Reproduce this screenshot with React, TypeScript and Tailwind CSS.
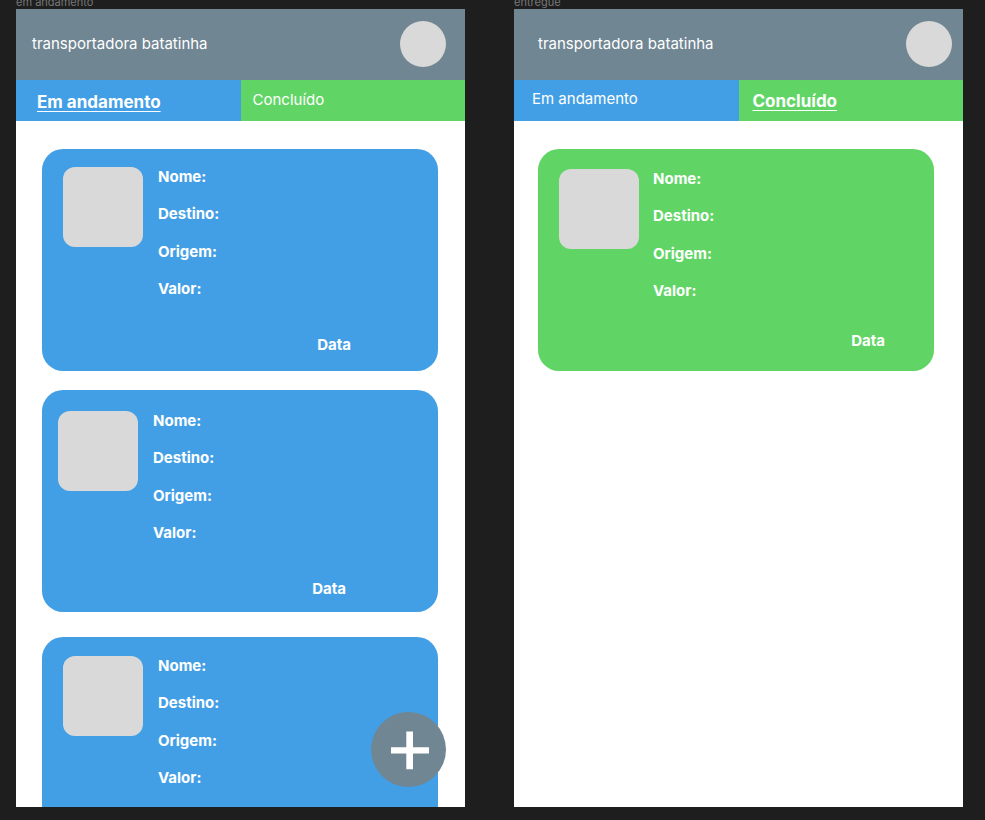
import { clsx } from "clsx";

type TabId = "andamento" | "concluido";

type Card = {
  id: number;
  inset: string;
  datePosition: string;
};

type ScreenProps = {
  label: string;
  active: TabId;
  headerPadding: string;
  listPadding: string;
  tabPadding: Record<TabId, string>;
  cardColor: string;
  cardGap: string;
  cards: Card[];
  canAdd?: boolean;
};

const fields = ["Nome:", "Destino:", "Origem:", "Valor:"];

const tabs: { id: TabId; title: string; color: string }[] = [
  { id: "andamento", title: "Em andamento", color: "bg-[#439fe5]" },
  { id: "concluido", title: "Concluído", color: "bg-[#60d565]" },
];

function DeliveryCard({ card, color, gap }: { card: Card; color: string; gap: string }) {
  return (
    <li
      className={clsx(
        "flex h-[222px] shrink-0 flex-col rounded-[21px] text-[15px] leading-[19px] font-bold text-white",
        color,
        card.inset,
      )}
    >
      <div className={clsx("flex", gap)}>
        <div className="size-20 shrink-0 rounded-xl bg-[#d9d9d9]" />
        <ul className="flex h-[131px] flex-col justify-between">
          {fields.map((field) => (
            <li key={field}>{field}</li>
          ))}
        </ul>
      </div>
      <p className={clsx("text-right", card.datePosition)}>Data</p>
    </li>
  );
}

function Screen({
  label,
  active,
  headerPadding,
  listPadding,
  tabPadding,
  cardColor,
  cardGap,
  cards,
  canAdd = false,
}: ScreenProps) {
  return (
    <section className="flex min-h-0 min-w-0 flex-col">
      <div className="flex h-[9px] shrink-0 items-end overflow-hidden pb-px text-[11px] leading-[12px] text-[#777777]">
        <h2>{label}</h2>
      </div>
      <div className="relative flex min-h-0 flex-1 flex-col overflow-hidden bg-white">
        <header
          className={clsx(
            "flex h-[71px] shrink-0 items-center justify-between bg-[#708693] pb-px text-white",
            headerPadding,
          )}
        >
          <h1 className="text-[15px] leading-[20px] font-normal">transportadora batatinha</h1>
          <button
            type="button"
            aria-label="Perfil"
            className="size-[46px] rounded-full bg-[#d9d9d9]"
          />
        </header>
        <nav className="grid h-[41px] shrink-0 grid-cols-2">
          {tabs.map((tab) => (
            <button
              key={tab.id}
              type="button"
              aria-pressed={tab.id === active}
              className={clsx(
                "flex items-center text-white",
                tab.color,
                tabPadding[tab.id],
                tab.id === active
                  ? "text-[17px] leading-[22px] font-bold underline decoration-1 underline-offset-3"
                  : "text-[15px] leading-[19px] font-normal",
              )}
            >
              {tab.title}
            </button>
          ))}
        </nav>
        <ul className={clsx("flex min-h-0 flex-1 flex-col overflow-hidden", listPadding)}>
          {cards.map((card) => (
            <DeliveryCard key={card.id} card={card} color={cardColor} gap={cardGap} />
          ))}
        </ul>
        {canAdd && (
          <button
            type="button"
            aria-label="Adicionar"
            className="absolute right-[19px] bottom-5 flex size-[75px] items-center justify-center rounded-full bg-[#708693] text-white"
          >
            <svg viewBox="0 0 75 75" className="size-full" fill="currentColor" aria-hidden="true">
              <path d="M35.3 19.500h6.700v15.800h16v6.200H42v15.700h-6.700V41.500h-15.300v-6.200h15.300z" />
            </svg>
          </button>
        )}
      </div>
    </section>
  );
}

export default function App() {
  return (
    <main className="grid h-screen grid-cols-2 grid-rows-1 gap-[49px] bg-[#1e1e1e] pr-[22px] pb-[13px] pl-4 font-[Inter,sans-serif]">
      <Screen
        label="em andamento"
        active="andamento"
        headerPadding="pl-4 pr-[19px]"
        listPadding="pl-[26px] pr-[27px] pt-7"
        tabPadding={{ andamento: "pl-[21px] pt-[2px]", concluido: "pl-3 pb-[2px]" }}
        cardColor="bg-[#439fe5]"
        cardGap="gap-[15px]"
        cards={[
          { id: 1, inset: "mb-[19px] pl-[21px] pt-[18px]", datePosition: "pt-[37px] pr-[87px]" },
          { id: 2, inset: "mb-[25px] pl-4 pt-[21px]", datePosition: "pt-[37px] pr-[92px]" },
          { id: 3, inset: "pl-[21px] pt-[19px]", datePosition: "pt-[37px] pr-[87px]" },
        ]}
        canAdd
      />
      <Screen
        label="entregue"
        active="concluido"
        headerPadding="pl-6 pr-[11px]"
        listPadding="pl-6 pr-[29px] pt-7"
        tabPadding={{ andamento: "pl-[18px] pb-1", concluido: "pl-[14px]" }}
        cardColor="bg-[#60d565]"
        cardGap="gap-[14px]"
        cards={[{ id: 4, inset: "pl-[21px] pt-5", datePosition: "pt-[31px] pr-[49px]" }]}
      />
    </main>
  );
}
